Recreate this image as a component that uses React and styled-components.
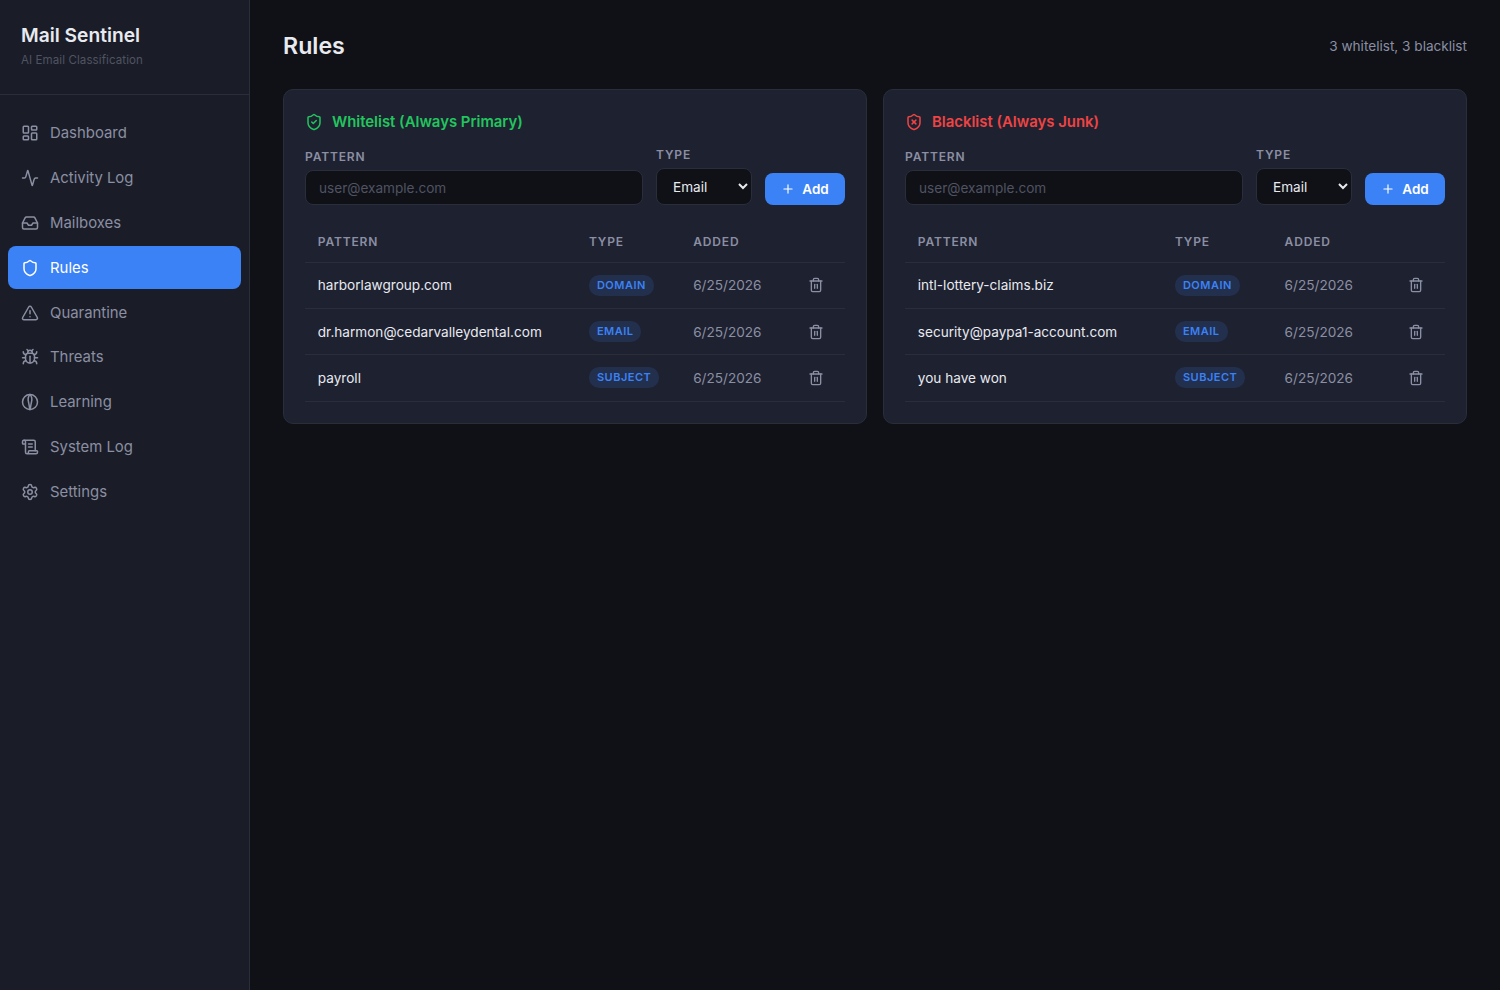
import React from 'react';
import styled, { createGlobalStyle } from 'styled-components';
import {
    LayoutDashboard,
    Activity,
    Inbox,
    Shield,
    ShieldCheck,
    ShieldX,
    TriangleAlert,
    Bug,
    ScrollText,
    Settings,
    Trash2,
    Plus,
} from 'lucide-react';

const GlobalStyle = createGlobalStyle`
    * { box-sizing: border-box; }
    html, body { margin: 0; height: 100%; }
    body {
        background: #0f1117;
        color: #e8eaf0;
        font-family: Inter, "Liberation Sans", sans-serif;
    }
`;

const Layout = styled.div`
    display: flex;
    min-height: 990px;
`;

const Sidebar = styled.aside`
    width: 250px;
    flex-shrink: 0;
    background: #1a1d27;
    border-right: 1px solid #2a2e3a;
`;

const Brand = styled.div`
    height: 95px;
    padding: 23px 21px 0;
    border-bottom: 1px solid #2a2e3a;
`;

const BrandName = styled.div`
    font-size: 19.2px;
    line-height: 24px;
    font-weight: 600;
    color: #e8eaf0;
`;

const BrandSub = styled.div`
    margin-top: 6px;
    font-size: 11.52px;
    line-height: 15px;
    letter-spacing: 0.1px;
    color: #4f5362;
`;

const Nav = styled.nav`
    display: flex;
    flex-direction: column;
    gap: 2px;
    padding: 17px 8px 0 8px;
`;

const NavItem = styled.a`
    display: flex;
    align-items: center;
    gap: 11px;
    height: 42.8px;
    padding: 0 13px;
    border-radius: 8px;
    font-size: 14.9px;
    color: ${(p) => (p.$active ? '#ffffff' : '#8b8fa3')};
    background: ${(p) => (p.$active ? '#3b82f6' : 'transparent')};
`;

const Main = styled.main`
    flex: 1;
    min-width: 0;
    padding: 32px 33px;
`;

const PageHeader = styled.header`
    display: flex;
    justify-content: space-between;
    align-items: center;
    height: 28px;
    margin-bottom: 29px;
`;

const Title = styled.h1`
    margin: 0;
    font-size: 23.2px;
    font-weight: 600;
    color: #e8eaf0;
`;

const Summary = styled.span`
    font-size: 13.6px;
    color: #8b8fa3;
`;

const Cards = styled.div`
    display: grid;
    grid-template-columns: 1fr 1fr;
    gap: 16px;
    align-items: start;
`;

const Card = styled.section`
    background: #1e2130;
    border: 1px solid #2a2e3a;
    border-radius: 10px;
    padding: 21px;
`;

const CardTitle = styled.h2`
    display: flex;
    align-items: center;
    gap: 9px;
    margin: 0 0 14px;
    height: 22px;
    font-size: 14.9px;
    font-weight: 600;
    color: ${(p) => p.$color};
`;

const Form = styled.form`
    display: flex;
    align-items: flex-end;
    gap: 13px;
    margin-bottom: 16px;
`;

const Field = styled.div`
    display: flex;
    flex-direction: column;
    flex: ${(p) => (p.$grow ? 1 : '0 0 auto')};
    min-width: 0;
`;

const Label = styled.label`
    margin-bottom: 6px;
    font-size: 12px;
    line-height: 15px;
    font-weight: 600;
    letter-spacing: 0.85px;
    text-transform: uppercase;
    color: #8b8fa3;
`;

const Input = styled.input`
    width: 100%;
    height: 35px;
    padding: 0 13px;
    background: #0f1117;
    border: 1px solid #2a2e3a;
    border-radius: 8px;
    font-family: inherit;
    font-size: 13.6px;
    color: #e8eaf0;
    &::placeholder { color: #4f5362; }
`;

const Select = styled.select`
    width: 96px;
    height: 37px;
    padding: 0 12px;
    background: #0f1117;
    border: 1px solid #2a2e3a;
    border-radius: 8px;
    font-family: inherit;
    font-size: 13.6px;
    color: #e8eaf0;
`;

const AddButton = styled.button`
    display: flex;
    align-items: center;
    justify-content: center;
    gap: 7px;
    width: 80px;
    height: 32px;
    border: 0;
    border-radius: 8px;
    background: #3b82f6;
    color: #ffffff;
    font-family: inherit;
    font-size: 13.5px;
    font-weight: 600;
`;

const Table = styled.table`
    width: 100%;
    border-collapse: collapse;
`;

const Th = styled.th`
    height: 41px;
    padding: 0 12.8px;
    border-bottom: 1px solid #2a2e3a;
    text-align: left;
    font-size: 12px;
    font-weight: 600;
    letter-spacing: 0.85px;
    text-transform: uppercase;
    color: #8b8fa3;
`;

const Td = styled.td`
    height: 46.4px;
    padding: 0 12.8px;
    border-bottom: 1px solid #2a2e3a;
    font-size: 13.6px;
    color: ${(p) => p.$color || '#e8eaf0'};
`;

const Badge = styled.span`
    display: inline-block;
    padding: 3px 8px;
    border-radius: 10px;
    background: rgba(59, 130, 246, 0.15);
    color: #3b82f6;
    font-size: 11px;
    line-height: 15px;
    font-weight: 600;
    letter-spacing: 0.5px;
    text-transform: uppercase;
`;

const DeleteButton = styled.button`
    display: flex;
    padding: 8px;
    margin: -8px 0 -8px auto;
    border: 0;
    background: none;
    color: #8b8fa3;
`;

// not in lucide as drawn: round head split by a wavy midline
const LearningIcon = () => (
    <svg width="18" height="18" viewBox="0 0 24 24" fill="none" stroke="currentColor" strokeWidth="2" strokeLinecap="round" strokeLinejoin="round">
        <circle cx="12" cy="12" r="10" />
        <path d="M12 2c-3 3-3 6-2 10s1 7 2 10" />
        <path d="M12 2c3 3 3 6 2 10s-1 7-2 10" />
    </svg>
);

const navItems = [
    { label: 'Dashboard', icon: <LayoutDashboard size={18} /> },
    { label: 'Activity Log', icon: <Activity size={18} /> },
    { label: 'Mailboxes', icon: <Inbox size={18} /> },
    { label: 'Rules', icon: <Shield size={18} />, active: true },
    { label: 'Quarantine', icon: <TriangleAlert size={18} /> },
    { label: 'Threats', icon: <Bug size={18} /> },
    { label: 'Learning', icon: <LearningIcon /> },
    { label: 'System Log', icon: <ScrollText size={18} /> },
    { label: 'Settings', icon: <Settings size={18} /> },
];

const RuleCard = ({ title, color, icon, rules }) => {
    return (
        <Card>
            <CardTitle $color={color}>
                {icon}
                {title}
            </CardTitle>
            <Form onSubmit={(e) => e.preventDefault()}>
                <Field $grow>
                    <Label>Pattern</Label>
                    <Input placeholder="user@example.com" />
                </Field>
                <Field>
                    <Label>Type</Label>
                    <Select defaultValue="email">
                        <option value="email">Email</option>
                        <option value="domain">Domain</option>
                        <option value="subject">Subject</option>
                    </Select>
                </Field>
                <AddButton>
                    <Plus size={14} />
                    Add
                </AddButton>
            </Form>
            <Table>
                <thead>
                    <tr>
                        <Th>Pattern</Th>
                        <Th>Type</Th>
                        <Th>Added</Th>
                        <Th />
                    </tr>
                </thead>
                <tbody>
                    {rules.map((rule) => (
                        <tr key={rule.pattern}>
                            <Td>{rule.pattern}</Td>
                            <Td><Badge>{rule.type}</Badge></Td>
                            <Td $color="#8b8fa3">6/25/2026</Td>
                            <Td>
                                <DeleteButton><Trash2 size={16} /></DeleteButton>
                            </Td>
                        </tr>
                    ))}
                </tbody>
            </Table>
        </Card>
    );
};

const whitelist = [
    { pattern: 'harborlawgroup.com', type: 'domain' },
    { pattern: 'dr.harmon@cedarvalleydental.com', type: 'email' },
    { pattern: 'payroll', type: 'subject' },
];

const blacklist = [
    { pattern: 'intl-lottery-claims.biz', type: 'domain' },
    { pattern: 'security@paypa1-account.com', type: 'email' },
    { pattern: 'you have won', type: 'subject' },
];

export default function App() {
    return (
        <Layout>
            <GlobalStyle />
            <Sidebar>
                <Brand>
                    <BrandName>Mail Sentinel</BrandName>
                    <BrandSub>AI Email Classification</BrandSub>
                </Brand>
                <Nav>
                    {navItems.map((item) => (
                        <NavItem key={item.label} $active={item.active}>
                            {item.icon}
                            {item.label}
                        </NavItem>
                    ))}
                </Nav>
            </Sidebar>
            <Main>
                <PageHeader>
                    <Title>Rules</Title>
                    <Summary>3 whitelist, 3 blacklist</Summary>
                </PageHeader>
                <Cards>
                    <RuleCard
                        title="Whitelist (Always Primary)"
                        color="#22c55e"
                        icon={<ShieldCheck size={18} />}
                        rules={whitelist}
                    />
                    <RuleCard
                        title="Blacklist (Always Junk)"
                        color="#ef4444"
                        icon={<ShieldX size={18} />}
                        rules={blacklist}
                    />
                </Cards>
            </Main>
        </Layout>
    );
}
